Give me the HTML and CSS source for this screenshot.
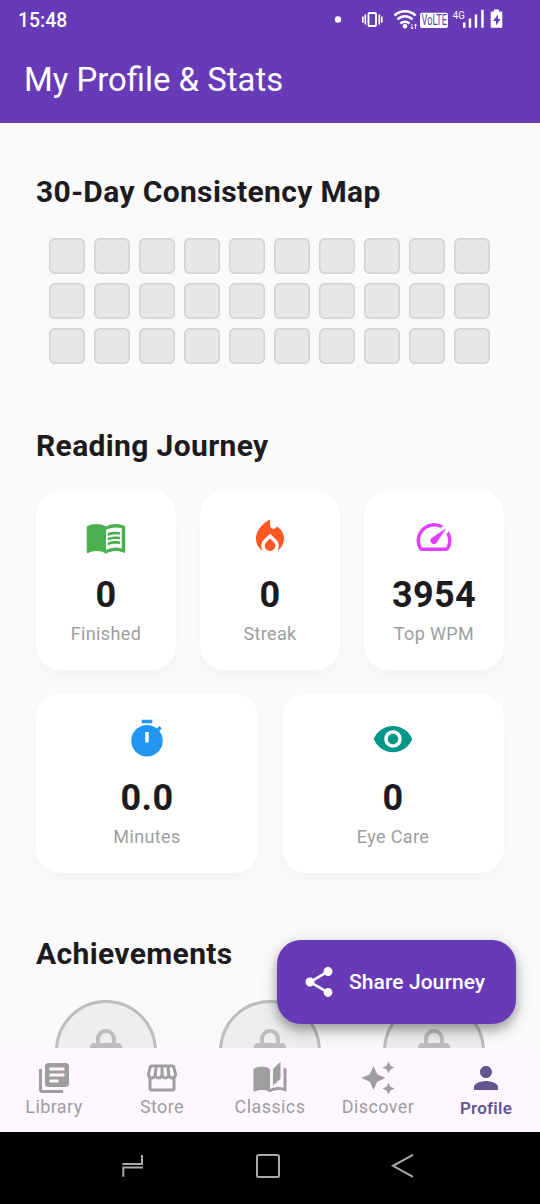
FILE: index.html
```html
<!DOCTYPE html>
<html lang="en">
<head>
<meta charset="utf-8">
<title>My Profile &amp; Stats</title>
<link rel="stylesheet" href="styles.css">
</head>
<body>
<div class="phone">
  <header class="top">
    <div class="status">
      <span class="clock">15:48</span>
      <svg class="status-icons" width="180" height="26" viewBox="0 0 180 26" fill="#fff">
        <circle cx="8" cy="12.500" r="3.200"/>
        <rect x="38.500" y="6" width="7.500" height="13" rx="1" fill="none" stroke="#fff" stroke-width="1.900"/>
        <path d="M35.300 7.500v10M49.300 7.500v10M32.800 9.500v6M51.800 9.500v6" stroke="#fff" stroke-width="1.700"/>
        <g fill="none" stroke="#fff" stroke-width="2.500">
          <path d="M64.500 8.500a15 15 0 0 1 21 0"/><path d="M67.500 12.500a10.500 10.500 0 0 1 15 0"/><path d="M70.500 16.500a6.500 6.500 0 0 1 9 0"/>
        </g>
        <circle cx="75" cy="19.200" r="2.300"/>
        <path d="M82 17v5M80.800 20.500l1.200 1.500 1.200-1.500M85.500 22v-5M84.300 18.500l1.200-1.500 1.200 1.500" fill="none" stroke="#fff" stroke-width=".9"/>
        <rect x="90" y="5.700" width="28" height="15.300" rx="2"/>
        <g transform="translate(91.500 18) scale(.66 1)"><text class="volte">VoLTE</text></g>
        <g transform="translate(122.700 11.800) scale(.88 1)"><text class="net">4G</text></g>
        <path d="M133 15.500h2.500v5.300H133zM138.700 11.500h2.500v9.300h-2.500zM144.700 7.500h2.500v13.300h-2.500zM151.200 2.800h2.500v18h-2.500z"/>
        <path fill-rule="evenodd" d="M164 2.500h5v2h2.500q.8 0 .8.800V20q0 .8-.8.800h-10q-.8 0-.8-.8V5.300q0-.8.800-.8H164zM168 7.500l-5 6.500h3v4.500l4.500-6.500h-2.700z"/>
      </svg>
    </div>
    <h1 class="title">My Profile &amp; Stats</h1>
  </header>

  <main class="body">
    <h2 class="heading">30-Day Consistency Map</h2>
    <div class="map">
      <i></i><i></i><i></i><i></i><i></i><i></i><i></i><i></i><i></i><i></i>
      <i></i><i></i><i></i><i></i><i></i><i></i><i></i><i></i><i></i><i></i>
      <i></i><i></i><i></i><i></i><i></i><i></i><i></i><i></i><i></i><i></i>
    </div>

    <h2 class="heading">Reading Journey</h2>
    <div class="row">
      <div class="card">
        <svg class="green" viewBox="0 0 24 24"><path d="M21 5c-1.110-.35-2.330-.5-3.500-.5-1.950 0-4.050.4-5.500 1.500-1.450-1.100-3.550-1.500-5.500-1.500S2.450 4.900 1 6v14.650c0 .25.25.5.5.5.1 0 .15-.05.25-.05C3.100 20.450 5.050 20 6.500 20c1.950 0 4.050.4 5.500 1.500 1.350-.85 3.800-1.500 5.500-1.500 1.650 0 3.350.3 4.750 1.050.1.050.15.050.25.050.25 0 .5-.25.5-.5V6c-.6-.45-1.250-.75-2-1zm0 13.500c-1.100-.35-2.300-.5-3.500-.5-1.700 0-4.150.65-5.500 1.500V8c1.350-.85 3.800-1.500 5.500-1.500 1.200 0 2.400.15 3.500.5v11.500z"/><path d="M17.500 10.500c.88 0 1.730.09 2.500.26V9.240c-.79-.15-1.640-.24-2.500-.24-1.700 0-3.240.29-4.500.83v1.660c1.130-.64 2.700-.99 4.500-.99zM13 12.490v1.660c1.130-.64 2.700-.99 4.500-.99.88 0 1.730.09 2.500.26V11.900c-.79-.15-1.640-.24-2.500-.24-1.700 0-3.240.3-4.500.83zM17.500 14.330c-1.700 0-3.240.29-4.500.83v1.660c1.130-.64 2.700-.99 4.500-.99.88 0 1.730.09 2.500.26v-1.520c-.79-.16-1.640-.24-2.500-.24z"/></svg>
        <strong>0</strong><span>Finished</span>
      </div>
      <div class="card">
        <svg class="orange" viewBox="0 0 24 24"><path d="M12 12.900l-2.130 2.090c-.56.56-.87 1.290-.87 2.070C9 18.680 10.350 20 12 20s3-1.320 3-2.940c0-.78-.31-1.520-.87-2.070L12 12.900z"/><path d="M16 6l-.44.55C14.380 8.020 12 7.190 12 5.300V2S4 6 4 13c0 2.920 1.560 5.470 3.890 6.860-.56-.79-.89-1.760-.89-2.800 0-1.320.52-2.560 1.470-3.500L12 10.100l3.530 3.470c.95.93 1.470 2.170 1.470 3.500 0 1.020-.31 1.960-.85 2.750 1.890-1.150 3.290-3.060 3.710-5.300.66-3.550-1.070-6.900-3.860-8.520z"/></svg>
        <strong>0</strong><span>Streak</span>
      </div>
      <div class="card">
        <svg class="pink" viewBox="0 0 24 24"><path d="M20.380 8.570l-1.230 1.850a8 8 0 0 1-.22 7.580H5.070A8 8 0 0 1 15.580 6.850l1.850-1.230A10 10 0 0 0 3.350 19a2 2 0 0 0 1.720 1h13.850a2 2 0 0 0 1.740-1 10 10 0 0 0-.27-10.440zm-9.790 6.840a2 2 0 0 0 2.830 0l5.660-8.490-8.490 5.660a2 2 0 0 0 0 2.830z"/></svg>
        <strong>3954</strong><span>Top WPM</span>
      </div>
    </div>
    <div class="row lower">
      <div class="card">
        <svg class="blue" viewBox="0 0 24 24"><path fill-rule="evenodd" d="M15 1H9v2h6V1zm-4 13h2V8h-2v6zm8.030-6.610l1.420-1.420c-.43-.51-.9-.99-1.410-1.410l-1.420 1.420C16.070 4.740 14.120 4 12 4c-4.970 0-9 4.030-9 9s4.020 9 9 9 9-4.030 9-9c0-2.120-.74-4.070-1.970-5.610z"/></svg>
        <strong>0.0</strong><span>Minutes</span>
      </div>
      <div class="card">
        <svg class="teal" viewBox="0 0 24 24"><path d="M12 4.500C7 4.500 2.730 7.610 1 12c1.730 4.390 6 7.500 11 7.500s9.270-3.110 11-7.500c-1.730-4.390-6-7.500-11-7.500zM12 17c-2.760 0-5-2.240-5-5s2.240-5 5-5 5 2.240 5 5-2.240 5-5 5zm0-8c-1.660 0-3 1.340-3 3s1.340 3 3 3 3-1.340 3-3-1.340-3-3-3z"/></svg>
        <strong>0</strong><span>Eye Care</span>
      </div>
    </div>

    <h2 class="heading">Achievements</h2>
    <div class="row badges">
      <div class="badge"><svg viewBox="0 0 24 24"><use href="#lock"/></svg></div>
      <div class="badge"><svg viewBox="0 0 24 24"><use href="#lock"/></svg></div>
      <div class="badge"><svg viewBox="0 0 24 24"><path id="lock" fill-rule="evenodd" d="M18 8h-1V6c0-2.760-2.240-5-5-5S7 3.240 7 6v2H6c-1.100 0-2 .9-2 2v10c0 1.100.9 2 2 2h12c1.100 0 2-.9 2-2V10c0-1.100-.9-2-2-2zM9 6c0-1.660 1.340-3 3-3s3 1.340 3 3v2H9z"/></svg></div>
    </div>

    <div class="fab">
      <svg viewBox="0 0 24 24"><path d="M18 16.080c-.76 0-1.440.3-1.960.77L8.910 12.700c.05-.23.09-.46.09-.7s-.04-.47-.09-.7l7.050-4.110c.54.5 1.250.81 2.040.81 1.660 0 3-1.340 3-3s-1.340-3-3-3-3 1.340-3 3c0 .24.04.47.09.7L8.040 9.810C7.500 9.310 6.790 9 6 9c-1.660 0-3 1.340-3 3s1.340 3 3 3c.79 0 1.500-.31 2.040-.81l7.120 4.160c-.05.21-.08.43-.08.65 0 1.610 1.310 2.920 2.920 2.920s2.920-1.310 2.920-2.920-1.310-2.920-2.920-2.920z"/></svg>
      <span>Share Journey</span>
    </div>
  </main>

  <nav class="tabs">
    <div class="tab"><svg viewBox="0 0 24 24"><path d="M4 6H2v14c0 1.100.9 2 2 2h14v-2H4V6zm16-4H8c-1.100 0-2 .9-2 2v12c0 1.100.9 2 2 2h12c1.100 0 2-.9 2-2V4c0-1.100-.9-2-2-2zm-1 9H9V9h10v2zm-4 4H9v-2h6v2zm4-8H9V5h10v2z"/></svg><span>Library</span></div>
    <div class="tab"><svg viewBox="0 0 24 24"><path d="M21.900 8.890l-1.050-4.370c-.22-.9-1-1.520-1.910-1.520H5.050c-.9 0-1.690.63-1.900 1.520L2.100 8.890c-.24 1.020-.02 2.060.62 2.880.08.11.19.19.28.29V19c0 1.100.9 2 2 2h14c1.100 0 2-.9 2-2v-6.940c.09-.09.2-.18.28-.28.64-.82.87-1.870.62-2.890zm-2.990-3.900l1.050 4.370c.1.42.01.84-.25 1.170-.14.18-.44.47-.94.47-.61 0-1.140-.49-1.210-1.140L16.980 5l1.930-.01zM13 5h1.960l.54 4.520c.05.39-.07.78-.33 1.070-.22.26-.54.41-.95.41-.67 0-1.220-.59-1.220-1.310V5zM8.490 9.520L9.040 5H11v4.690c0 .72-.55 1.310-1.290 1.310-.34 0-.65-.15-.89-.41-.25-.29-.37-.68-.33-1.070zm-4.450-.16L5.050 5h1.970l-.58 4.860c-.08.65-.6 1.140-1.210 1.140-.49 0-.8-.29-.93-.47-.27-.32-.36-.75-.26-1.170zM5 19v-6.030c.08.010.15.030.23.030.87 0 1.660-.36 2.240-.95.6.6 1.400.95 2.310.95.87 0 1.650-.36 2.230-.93.59.57 1.390.93 2.290.93.84 0 1.640-.35 2.240-.95.58.59 1.370.95 2.240.95.08 0 .15-.02.23-.03V19H5z"/></svg><span>Store</span></div>
    <div class="tab"><svg viewBox="0 0 24 24"><path d="M19 1l-5 5v11l5-4.500V1zM1 6v14.650c0 .25.25.5.5.5.1 0 .15-.05.25-.05C3.100 20.450 5.050 20 6.500 20c1.950 0 4.050.4 5.500 1.500V6c-1.450-1.100-3.550-1.500-5.500-1.500S2.450 4.900 1 6zM23 19.500V6c-.6-.45-1.250-.75-2-1v13.500c-1.100-.35-2.300-.5-3.500-.5-1.700 0-4.150.65-5.500 1.500v2c1.350-.85 3.800-1.500 5.500-1.500 1.650 0 3.350.3 4.750 1.050.1.050.15.050.25.050.25 0 .5-.25.5-.5v-1.100z"/></svg><span>Classics</span></div>
    <div class="tab"><svg viewBox="0 0 24 24"><path d="M19 9l1.250-2.750L23 5l-2.750-1.250L19 1l-1.250 2.750L15 5l2.750 1.250L19 9zm-7.500.5L9 4 6.500 9.500 1 12l5.500 2.500L9 20l2.500-5.500L17 12l-5.500-2.500zM19 15l-1.250 2.750L15 19l2.750 1.250L19 23l1.250-2.750L23 19l-2.750-1.250L19 15z"/></svg><span>Discover</span></div>
    <div class="tab active"><svg viewBox="0 0 24 24"><path d="M12 12c2.210 0 4-1.790 4-4s-1.790-4-4-4-4 1.790-4 4 1.790 4 4 4zm0 2c-2.670 0-8 1.340-8 4v2h16v-2c0-2.660-5.330-4-8-4z"/></svg><span>Profile</span></div>
  </nav>

  <div class="sysnav">
    <svg width="30" height="30" viewBox="0 0 30 30"><path d="M2.300 14H22V5M3.300 26.700V17.500H23"/></svg>
    <svg width="30" height="30" viewBox="0 0 30 30"><rect x="2" y="5" width="22" height="22" rx="1.500"/></svg>
    <svg width="30" height="30" viewBox="0 0 30 30"><path d="M23 4.800L3 15.800l20 11"/></svg>
  </div>
</div>
</body>
</html>
```

FILE: styles.css
```css
* { box-sizing: border-box; margin: 0; padding: 0; }
body { font-family: Roboto, "Liberation Sans", sans-serif; background: #000; }
.phone { width: 540px; height: 1204px; display: flex; flex-direction: column; overflow: hidden; }

.top { height: 123px; flex: none; background: #673ab7; color: #fff; }
.status { height: 40px; padding: 0 30px 0 18px; display: flex; align-items: center; justify-content: space-between; }
.clock { font-size: 19.400px; font-weight: 500; line-height: 24px; padding-top: 1px; }
.status-icons { display: block; }
.volte { font: 400 14px Roboto, sans-serif; fill: #673ab7; }
.net { font: 400 11px Roboto, sans-serif; fill: #fff; }
.title { font-size: 32.900px; font-weight: 400; line-height: 42px; padding: 19px 0 0 24px; }

.body { flex: 1; min-height: 0; position: relative; overflow: hidden; background: #fafafa; padding: 48px 36px 0; }
.heading { font-size: 30px; font-weight: 700; line-height: 42px; color: #1d1b20; letter-spacing: .36px; }
.map { display: grid; grid-template-columns: repeat(10, 36px); gap: 9px; padding: 25px 13px 61px; }
.map i { height: 36px; border-radius: 6px; background: #e7e7e7; box-shadow: inset 0 0 0 1.5px #d2d2d2; }
.row { display: flex; gap: 24px; margin-top: 24px; }
.card {
  flex: 1; height: 179px; padding-top: 24.500px; border-radius: 24px; background: #fff;
  box-shadow: 0 6px 15px rgba(0, 0, 0, .03);
  display: flex; flex-direction: column; align-items: center;
}
.card svg { width: 42px; height: 42px; fill: currentColor; }
.card strong { margin-top: 12.500px; font-size: 36px; line-height: 51px; color: #1d1b20; letter-spacing: .35px; }
.card span { font-size: 18px; line-height: 26px; color: #9e9e9e; letter-spacing: .38px; }
.lower .card { padding-top: 24px; }
.lower .card strong { margin-top: 13px; }
.green { color: #4caf50; }
.orange { color: #ff5722; }
.pink { color: #e040fb; }
.blue { color: #2196f3; }
.teal { color: #009688; }
.row + .heading { margin-top: 60px; }
.badges { margin-top: 25px; justify-content: space-around; }
.badge { width: 102px; height: 102px; margin: 0 19px; border: 3px solid #bdbdbd; border-radius: 50%; background: #eee; display: flex; align-items: center; justify-content: center; flex: none; }
.badge svg { width: 48px; height: 48px; fill: #bdbdbd; }

.fab {
  position: absolute; right: 24px; bottom: 24px; width: 239px; height: 84px; border-radius: 24px;
  background: #673ab7; color: #fff; padding-left: 24px; display: flex; align-items: center; gap: 12px;
  box-shadow: 0 5px 8px rgba(0, 0, 0, .2), 0 9px 15px rgba(0, 0, 0, .14), 0 2px 20px rgba(0, 0, 0, .1);
}
.fab svg { width: 36px; height: 36px; fill: #fff; }
.fab span { font-size: 21px; font-weight: 500; letter-spacing: .08px; white-space: nowrap; }

.tabs { height: 84px; flex: none; display: flex; background: #fef7ff; }
.tab { flex: 1; display: flex; flex-direction: column; align-items: center; padding-top: 12px; color: #9e9e9e; }
.tab svg { width: 36px; height: 36px; fill: currentColor; }
.tab span { font-size: 18px; line-height: 22px; letter-spacing: .4px; }
.active { color: #65558f; }
.tab.active span { font-size: 17px; font-weight: 600; line-height: 24px; letter-spacing: .25px; }

.sysnav { height: 72px; flex: none; background: #000; display: flex; justify-content: center; gap: 105px; align-items: flex-start; padding-top: 18px; }
.sysnav svg { fill: none; stroke: #aaa; stroke-width: 2; }
```
